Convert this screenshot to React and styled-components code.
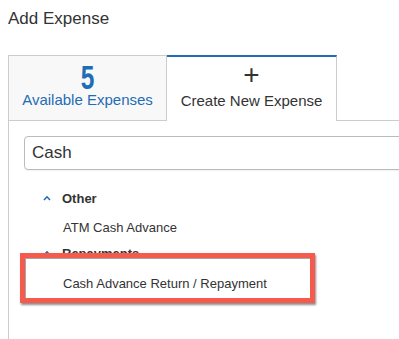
import React from 'react'
import styled, { createGlobalStyle } from 'styled-components'

const Global = createGlobalStyle`
  html, body { margin: 0; padding: 0; background: #fff; }
  body { font-family: "Liberation Sans", Arial, sans-serif; color: #333; }
`

const Page = styled.div`
  width: 399px;
  height: 339px;
  overflow: hidden;
  padding: 9px 0 0 8px;
  box-sizing: border-box;
  display: flex;
  flex-direction: column;
`

const Title = styled.h1`
  margin: 0;
  font-size: 17px;
  line-height: 20px;
  font-weight: normal;
  color: #333;
`

const TabRow = styled.div`
  display: flex;
  margin-top: 26px;
  height: 66px;
`

const Tab = styled.div`
  box-sizing: border-box;
  width: ${p => p.$w}px;
  display: flex;
  flex-direction: column;
  align-items: center;
  justify-content: flex-end;
  padding-bottom: 11px;
  background: ${p => (p.$active ? '#fff' : '#f8f8f8')};
  border: 1px solid #ccc;
  border-top: ${p => (p.$active ? '2px solid #1f6db5' : '1px solid #ccc')};
  border-left: ${p => (p.$active ? 'none' : '1px solid #ccc')};
  border-bottom: ${p => (p.$active ? 'none' : '1px solid #ccc')};
  color: ${p => (p.$active ? '#333' : '#1f6db5')};
`

const Count = styled.div`
  font-family: "Liberation Sans", sans-serif;
  font-weight: bold;
  font-size: 34px;
  line-height: 28px;
  color: #1f6db5;
  transform: scaleX(0.72);
`

const Plus = styled.div`
  font-size: 28px;
  line-height: 24px;
  font-weight: 300;
  color: #333;
  margin-bottom: 5px;
`

const TabLabel = styled.div`
  font-size: 15px;
  line-height: 18px;
  white-space: nowrap;
`

const Filler = styled.div`
  flex: 1;
  border-bottom: 1px solid #ccc;
`

const Panel = styled.div`
  flex: 1;
  border-left: 1px solid #ccc;
  padding: 15px 0 0 15px;
`

const Search = styled.div`
  box-sizing: border-box;
  width: 420px;
  height: 34px;
  border: 1px solid #bbb;
  border-radius: 4px;
  padding-left: 7px;
  display: flex;
  align-items: center;
  font-size: 17px;
  color: #333;
  box-shadow: 0 1px 1px rgba(0, 0, 0, 0.06);
`

const List = styled.div`
  margin-top: 15px;
  display: flex;
  flex-direction: column;
`

const GroupHeader = styled.div`
  display: flex;
  align-items: center;
  height: 26px;
  padding-left: 19px;
  font-size: 13px;
  font-weight: bold;
  color: #333;
  svg { margin-right: 11px; }
`

const Item = styled.div`
  box-sizing: border-box;
  height: 29px;
  padding: 4px 0 0 39px;
  display: flex;
  align-items: center;
  font-size: 13px;
  color: #333;
`

const Callout = styled.div`
  margin: -13px 0 0 -4px;
  width: 295px;
  height: 50px;
  box-sizing: border-box;
  border: 5px solid #f45b4c;
  background: #fff;
  display: flex;
  align-items: center;
  padding: 10px 0 0 38px;
  font-size: 13px;
  color: #333;
  box-shadow: 1px 2px 2px rgba(0, 0, 0, 0.45), inset 1px 1px 0 rgba(0, 0, 0, 0.35);
`

const Chevron = () => (
  <svg width="8" height="6" viewBox="0 0 8 6">
    <path d="M1 5 L4 1.8 L7 5" fill="none" stroke="#1f6db5" strokeWidth="1.6" />
  </svg>
)

export default function App() {
  return (
    <>
      <Global />
      <Page>
        <Title>Add Expense</Title>
        <TabRow>
          <Tab $w={159}>
            <Count>5</Count>
            <TabLabel>Available Expenses</TabLabel>
          </Tab>
          <Tab $w={170} $active>
            <Plus>+</Plus>
            <TabLabel>Create New Expense</TabLabel>
          </Tab>
          <Filler />
        </TabRow>
        <Panel>
          <Search>Cash</Search>
          <List>
            <GroupHeader><Chevron />Other</GroupHeader>
            <Item>ATM Cash Advance</Item>
            <GroupHeader><Chevron />Repayments</GroupHeader>
            <Callout>Cash Advance Return / Repayment</Callout>
          </List>
        </Panel>
      </Page>
    </>
  )
}
